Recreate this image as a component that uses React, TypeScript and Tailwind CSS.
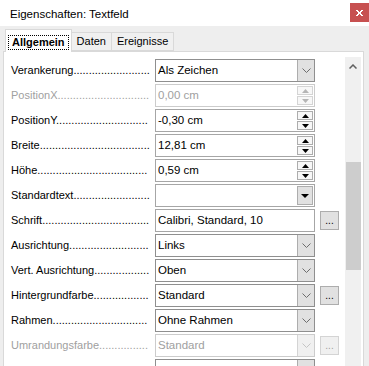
import React, { useMemo } from 'react';

type Kind = 'combo' | 'spin' | 'text' | 'drop';

interface Row {
  label: string;
  value: string;
  kind: Kind;
  disabled?: boolean;
  more?: boolean;
}

const rows: Row[] = [
  { label: 'Verankerung', value: 'Als Zeichen', kind: 'combo' },
  { label: 'PositionX', value: '0,00 cm', kind: 'spin', disabled: true },
  { label: 'PositionY', value: '-0,30 cm', kind: 'spin' },
  { label: 'Breite', value: '12,81 cm', kind: 'spin' },
  { label: 'Höhe', value: '0,59 cm', kind: 'spin' },
  { label: 'Standardtext', value: '', kind: 'drop' },
  { label: 'Schrift', value: 'Calibri, Standard, 10', kind: 'text', more: true },
  { label: 'Ausrichtung', value: 'Links', kind: 'combo' },
  { label: 'Vert. Ausrichtung', value: 'Oben', kind: 'combo' },
  { label: 'Hintergrundfarbe', value: 'Standard', kind: 'combo', more: true },
  { label: 'Rahmen', value: 'Ohne Rahmen', kind: 'combo' },
  { label: 'Umrandungsfarbe', value: 'Standard', kind: 'combo', disabled: true, more: true },
  { label: '', value: '', kind: 'combo' },
];

const FONT = '"Liberation Sans", Arial, sans-serif';
const LABEL_W = 139;

// fill the label up to LABEL_W with dot leaders
function leaderFor(text: string) {
  if (!text) return '';
  const ctx = document.createElement('canvas').getContext('2d');
  if (!ctx) return '.'.repeat(20);
  ctx.font = `11px ${FONT}`;
  const free = LABEL_W - ctx.measureText(text).width;
  const dot = ctx.measureText('.').width || 3;
  return '.'.repeat(Math.max(0, Math.floor(free / dot)));
}

function Chevron({ disabled }: { disabled?: boolean }) {
  return (
    <svg width="9" height="5" viewBox="0 0 9 5">
      <polyline points="0.5,0.5 4.5,4.5 8.5,0.5" fill="none" stroke={disabled ? '#c4c4c4' : '#6d6d6d'} strokeWidth="1" />
    </svg>
  );
}

function SpinButtons({ disabled }: { disabled?: boolean }) {
  const fill = disabled ? '#b5b5b5' : '#000';
  const border = disabled ? 'border-[#d4d4d4]' : 'border-[#adadad]';
  return (
    <div className="flex flex-col justify-center gap-[1px] w-[16px] mr-[1px]">
      <div className={`h-[9px] border ${border} bg-[#f7f7f7] flex items-center justify-center`}>
        <svg width="7" height="4" viewBox="0 0 7 4"><polygon points="3.5,0 7,4 0,4" fill={fill} /></svg>
      </div>
      <div className={`h-[9px] border ${border} bg-[#f7f7f7] flex items-center justify-center`}>
        <svg width="7" height="4" viewBox="0 0 7 4"><polygon points="0,0 7,0 3.5,4" fill={fill} /></svg>
      </div>
    </div>
  );
}

function Field({ row }: { row: Row }) {
  const dis = row.disabled;
  const border =
    row.kind === 'combo'
      ? dis
        ? 'border-[#cccccc]'
        : 'border-[#8f8f8f]'
      : dis
        ? 'border-[#cccccc]'
        : 'border-[#a6a6a6]';
  return (
    <div className={`w-[160px] h-[23px] border ${border} bg-white flex items-stretch`}>
      <div className={`flex-1 min-w-0 flex items-center pl-[2px] whitespace-nowrap text-[11.5px] ${dis ? 'text-[#a0a0a0]' : 'text-black'}`}>
        {row.value}
      </div>
      {row.kind === 'combo' && (
        <div className={`w-[17px] flex items-center justify-center border-l ${dis ? 'border-[#d4d4d4] bg-[#f0f0f0]' : 'border-[#adadad] bg-[#e1e1e1]'}`}>
          <Chevron disabled={dis} />
        </div>
      )}
      {row.kind === 'drop' && (
        <div className="flex items-center mr-[1px]">
          <div className="w-[16px] h-[19px] border border-[#adadad] bg-[#e1e1e1] flex items-center justify-center">
            <svg width="8" height="4" viewBox="0 0 8 4"><polygon points="0,0 8,0 4,4" fill="#000" /></svg>
          </div>
        </div>
      )}
      {row.kind === 'spin' && <SpinButtons disabled={dis} />}
    </div>
  );
}

function Label({ text, disabled }: { text: string; disabled?: boolean }) {
  const dots = useMemo(() => leaderFor(text), [text]);
  return (
    <div className={`w-[139px] whitespace-nowrap ${disabled ? 'text-[#a0a0a0]' : 'text-black'}`}>
      {text}
      {dots}
    </div>
  );
}

function PropRow({ row }: { row: Row }) {
  return (
    <div className="h-[23px] flex items-center">
      <div className="pl-[7px] w-[151px]">
        <Label text={row.label} disabled={row.disabled} />
      </div>
      <Field row={row} />
      {row.more && (
        <div
          className={`ml-[5px] w-[19px] h-[19px] border flex items-end justify-center pb-[3px] text-[10px] leading-none ${
            row.disabled ? 'border-[#d4d4d4] bg-[#f0f0f0] text-[#a0a0a0]' : 'border-[#adadad] bg-[#e1e1e1] text-black'
          }`}
        >
          ...
        </div>
      )}
    </div>
  );
}

export default function App() {
  return (
    <div
      className="w-[369px] h-[366px] overflow-hidden bg-[#eeeeee] flex flex-col text-[11px]"
      style={{ fontFamily: FONT }}
    >
      {/* title bar */}
      <div className="h-[26px] bg-white flex items-start justify-between shrink-0">
        <span className="pl-[10px] pt-[6px] text-[11.5px] text-black">Eigenschaften: Textfeld</span>
        <div className="mt-[3px] w-[19px] h-[19px] bg-[#c75050] flex items-center justify-center">
          <svg width="7" height="6" viewBox="0 0 7 6">
            <path d="M0 0h2v1h1v1h1V1h1V0h2v1H6v1H5v2h1v1h1v1H5V5H4V4H3v1H2v1H0V5h1V4h1V2H1V1H0z" fill="#fff" />
          </svg>
        </div>
      </div>

      {/* tabs */}
      <div className="flex items-end pl-[5px] mt-[3px] h-[22px] shrink-0 relative z-10">
        <div className="h-[23px] px-[2px] pt-[5px] bg-white border border-b-0 border-[#d9d9d9] -mb-[1px]">
          <div className="border border-dotted border-black px-[3px] leading-[13px] font-bold">Allgemein</div>
        </div>
        <div className="h-[19px] px-[5px] flex items-center bg-[#f0f0f0] border border-l-0 border-[#d9d9d9]">Daten</div>
        <div className="h-[19px] px-[5px] flex items-center bg-[#f0f0f0] border border-l-0 border-[#d9d9d9]">Ereignisse</div>
      </div>

      {/* panel */}
      <div className="ml-[3px] w-[361px] flex-1 bg-white border border-[#d9d9d9] flex">
        <div className="w-[341px] pt-[7px] flex flex-col gap-[2px]">
          {rows.map((r, i) => (
            <PropRow key={i} row={r} />
          ))}
        </div>
        <div className="w-[16px] mt-[5px] bg-[#f0f0f0] flex flex-col items-center">
          <div className="h-[18px] flex items-center justify-center">
            <svg width="8" height="5" viewBox="0 0 8 5">
              <polyline points="0.5,4.5 4,1 7.5,4.5" fill="none" stroke="#606060" strokeWidth="1.5" />
            </svg>
          </div>
          <div className="h-[87px]" />
          <div className="w-[15px] h-[108px] bg-[#cdcdcd]" />
          <div className="flex-1" />
          <div className="h-[18px] flex items-center justify-center">
            <svg width="8" height="5" viewBox="0 0 8 5">
              <polyline points="0.5,0.5 4,4 7.5,0.5" fill="none" stroke="#606060" strokeWidth="1.5" />
            </svg>
          </div>
        </div>
      </div>
    </div>
  );
}
